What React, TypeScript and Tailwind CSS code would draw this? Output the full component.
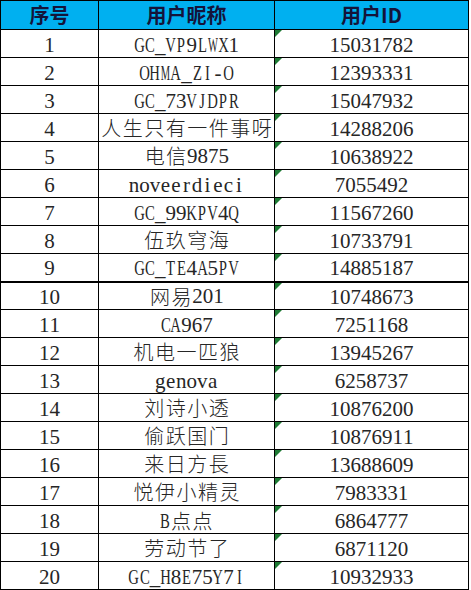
import React from "react";

const ROWS: [number, string, string][] = [
  [1, "GC_VP9LWX1", "15031782"],
  [2, "OHMA_ZI-O", "12393331"],
  [3, "GC_73VJDPR", "15047932"],
  [4, "人生只有一件事呀", "14288206"],
  [5, "电信9875", "10638922"],
  [6, "noveerdieci", "7055492"],
  [7, "GC_99KPV4Q", "11567260"],
  [8, "伍玖穹海", "10733791"],
  [9, "GC_TE4A5PV", "14885187"],
  [10, "网易201", "10748673"],
  [11, "CA967", "7251168"],
  [12, "机电一匹狼", "13945267"],
  [13, "genova", "6258737"],
  [14, "刘诗小透", "10876200"],
  [15, "偷跃国门", "10876911"],
  [16, "来日方長", "13688609"],
  [17, "悦伊小精灵", "7983331"],
  [18, "B点点", "6864777"],
  [19, "劳动节了", "6871120"],
  [20, "GC_H8E75Y7I", "10932933"],
];

// SimSun-like cell text: half-width serif latin on a fixed pitch, full-width CJK
function Cell({ text }: { text: string }) {
  return (
    <span className="inline-flex items-center justify-center whitespace-nowrap pt-[3px]">
      {Array.from(text).map((ch, i) => {
        if (/[\u3000-\u9fff\uff00-\uffef]/.test(ch)) {
          return (
            <span key={i} className="inline-block w-[21.5px] text-center text-[20px] font-light [font-family:'Noto_Sans_CJK_SC',sans-serif]">
              {ch}
            </span>
          );
        }
        let squeeze = "inline-block";
        if (/[WM]/.test(ch)) squeeze = "inline-block scale-x-[0.5]";
        else if (/[A-Z]/.test(ch)) squeeze = "inline-block scale-x-[0.7]";
        return (
          <span key={i} className="inline-flex w-[10.5px] justify-center">
            <span className={squeeze}>{ch}</span>
          </span>
        );
      })}
    </span>
  );
}

function Corner() {
  return (
    <svg className="absolute left-0 top-0" width="7" height="7" viewBox="0 0 7 7">
      <polygon points="0,0 7,0 0,7" fill="#1e7b34" />
    </svg>
  );
}

export default function App() {
  return (
    <div className="w-[471px] h-[590px] bg-white overflow-hidden">
      <table className="border-collapse table-fixed w-[468px] text-[#262626] [font-family:'Liberation_Serif',serif] text-[21px]">
        <colgroup>
          <col className="w-[98px]" />
          <col className="w-[176px]" />
          <col className="w-[194px]" />
        </colgroup>
        <thead>
          <tr className="h-[29px] bg-[#00b0f0]">
            {["序号", "用户昵称", "用户ID"].map((h) => (
              <th
                key={h}
                className="border border-black p-0 text-center font-bold text-[20px] leading-none text-[#14143a] [font-family:'Noto_Sans_CJK_SC',sans-serif]"
              >
                {h}
              </th>
            ))}
          </tr>
        </thead>
        <tbody>
          {ROWS.map(([n, name, id]) => (
            <tr key={n} className={n === 10 ? "h-[28px] border-t-2 border-black" : "h-[28px]"}>
              <td className="border border-black p-0 text-center leading-none">
                <Cell text={String(n)} />
              </td>
              <td className="border border-black p-0 text-center leading-none">
                <Cell text={name} />
              </td>
              <td className="relative border border-black p-0 text-center leading-none">
                <Corner />
                <Cell text={id} />
              </td>
            </tr>
          ))}
        </tbody>
      </table>
    </div>
  );
}
